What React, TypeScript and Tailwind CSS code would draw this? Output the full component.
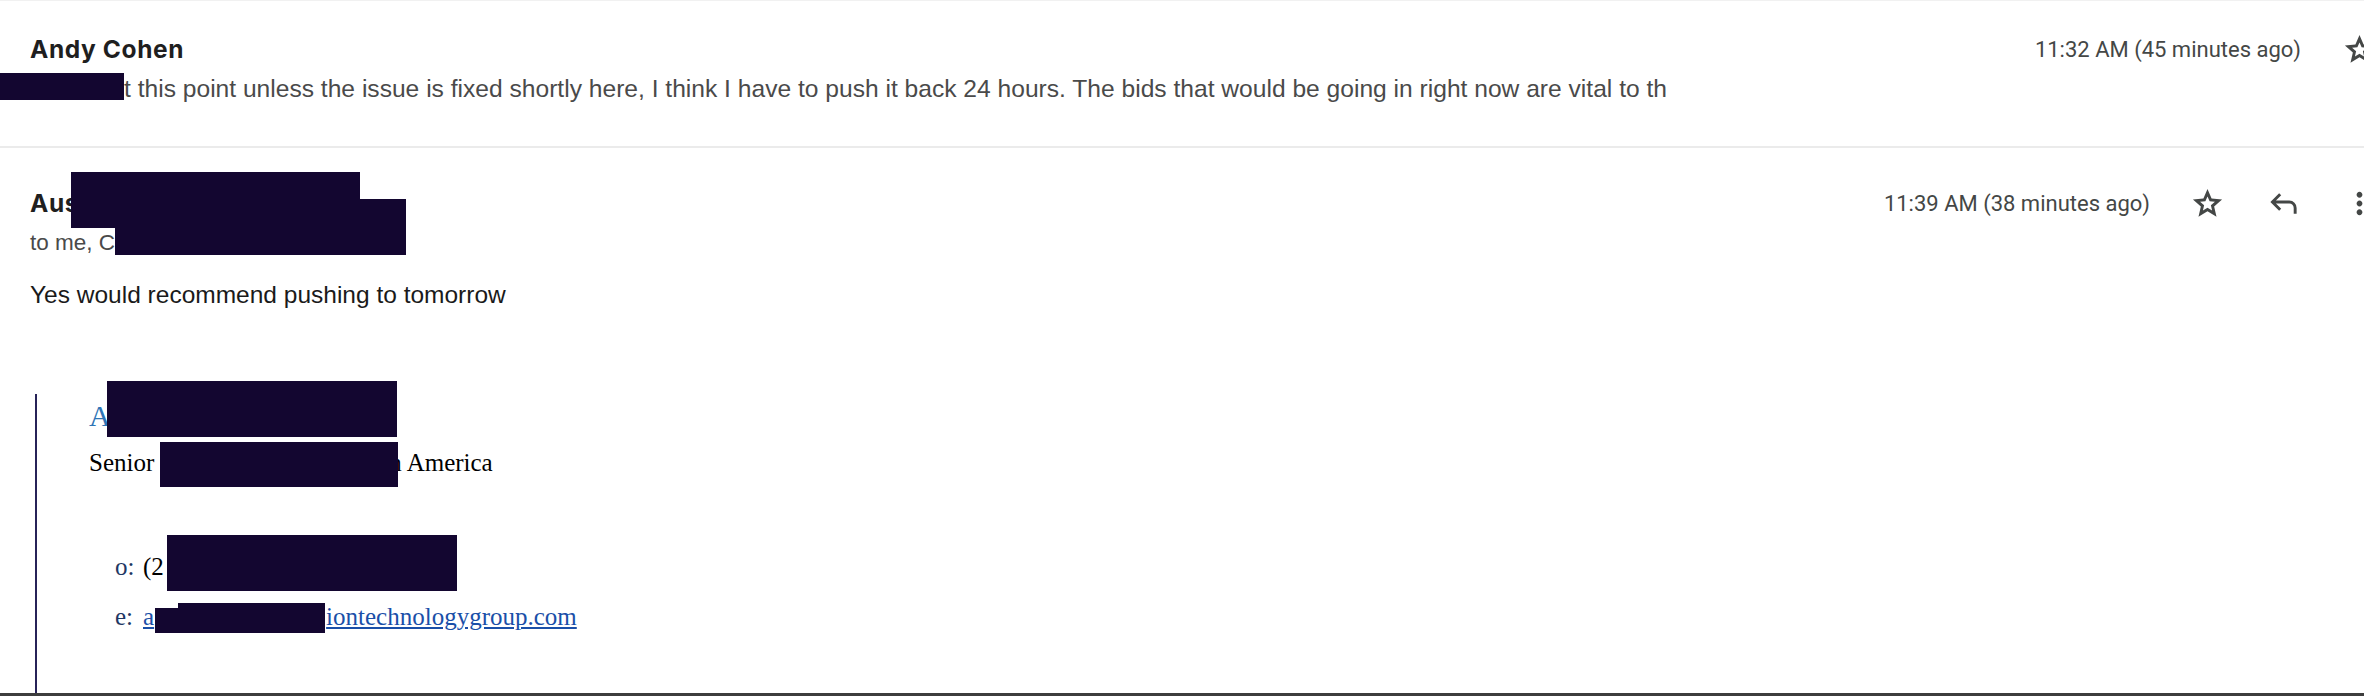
import React from 'react';

const ICON = '#444746';

const StarIcon = () => (
  <svg width="35" height="35" viewBox="0 -960 960 960" fill={ICON}>
    <path d="M354-287l126-76 126 77-33-144 111-96-146-13-58-136-58 135-146 13 111 97-33 143ZM233-120l65-281L80-590l288-25 112-265 112 265 288 25-218 189 65 281-247-149-247 149Z" />
  </svg>
);

const ReplyIcon = () => (
  <svg width="35" height="35" viewBox="0 -960 960 960" fill={ICON}>
    <path d="M760-200v-160q0-50-35-85t-85-35H273l144 144-57 56-240-240 240-240 57 56-144 144h367q83 0 141.5 58.5T840-360v160h-80Z" />
  </svg>
);

const MoreIcon = () => (
  <svg width="35" height="35" viewBox="0 -960 960 960" fill={ICON}>
    <path d="M480-160q-33 0-56.5-23.5T400-240q0-33 23.5-56.5T480-320q33 0 56.5 23.5T560-240q0 33-23.5 56.5T480-160Zm0-240q-33 0-56.5-23.5T400-480q0-33 23.5-56.5T480-560q33 0 56.5 23.5T560-480q0 33-23.5 56.5T480-400Zm0-240q-33 0-56.5-23.5T400-720q0-33 23.5-56.5T480-800q33 0 56.5 23.5T560-720q0 33-23.5 56.5T480-640Z" />
  </svg>
);

const IconButton = ({ children }: { children: React.ReactNode }) => (
  <button className="w-[76px] h-[35px] flex items-center justify-center">{children}</button>
);

const Stamp = ({ text }: { text: string }) => (
  <span className="font-['Roboto',sans-serif] text-[22px] text-[#444746] whitespace-nowrap">{text}</span>
);

const senderFont = "font-['Inter',sans-serif] font-bold text-[24.5px] tracking-[0.6px] leading-[35px] text-[#1f1f1f]";

export default function App() {
  return (
    <div className="relative w-screen h-[696px] overflow-hidden bg-white flex flex-col">
      <div className="flex-1 min-h-0 overflow-hidden">
        <div className="w-[2397px] font-['Liberation_Sans',Arial,sans-serif]">
          {/* Collapsed message */}
          <div className="h-[148px] border-t border-[#f1f1f1] border-b-2 border-b-[#ebebeb] pl-[30px] pt-[31px]">
            <div className="flex items-center h-[35px]">
              <div className={`flex-1 ${senderFont}`}>Andy Cohen</div>
              <Stamp text="11:32 AM (45 minutes ago)" />
              <div className="ml-[20px] flex">
                <IconButton>
                  <StarIcon />
                </IconButton>
              </div>
            </div>
            <div className="mt-[7px] leading-[30px] text-[24.6px] text-[#4a4a4a] whitespace-nowrap">
              <span className="inline-block w-[94px]" />t this point unless the issue is fixed shortly here, I think I have to push it back 24 hours. The bids that would be going in right now are vital to th
            </div>
          </div>

          {/* Expanded message */}
          <div className="pl-[30px] pt-[37.5px]">
            <div className="flex items-center h-[35px]">
              <div className={`flex-1 ${senderFont}`}>Aus</div>
              <Stamp text="11:39 AM (38 minutes ago)" />
              <div className="ml-[19px] flex">
                <IconButton>
                  <StarIcon />
                </IconButton>
                <IconButton>
                  <ReplyIcon />
                </IconButton>
                <IconButton>
                  <MoreIcon />
                </IconButton>
              </div>
            </div>
            <div className="mt-[9px] leading-[26px] text-[22.5px] text-[#4a4a4a]">to me, C</div>
            <div className="mt-[24px] leading-[30px] text-[24.5px] text-[#1a1a1a]">Yes would recommend pushing to tomorrow</div>

            {/* Signature */}
            <div className="mt-[84px] ml-[5px] h-[400px] border-l-2 border-[#272358] pl-[52px] pt-[2px] font-['Liberation_Serif','Times_New_Roman',serif]">
              <div className="leading-[40px] text-[30px] text-[#2e75b6]">A</div>
              <div className="mt-[12px] leading-[30px] text-[25px] text-black whitespace-nowrap">
                Senior<span className="inline-block w-[235px]" />n America
              </div>
              <div className="mt-[74px] pl-[26px] leading-[30px] text-[25px] text-black whitespace-nowrap">
                <span className="inline-block w-[28px] text-[#1f3864]">o:</span>(2
              </div>
              <div className="mt-[20px] pl-[26px] leading-[30px] text-[25px] whitespace-nowrap">
                <span className="inline-block w-[28px] text-[#1f3864]">e:</span>
                <a className="text-[#1a4fa8] underline">
                  a<span className="inline-block w-[172px]" />iontechnologygroup.com
                </a>
              </div>
            </div>
          </div>
        </div>
      </div>
      <div className="h-[3px] bg-[#3d3d3d]" />

      {/* Redactions */}
      <div className="absolute left-0 top-[73px] w-[124px] h-[27px] bg-[#130630]" />
      <div className="absolute left-[71px] top-[172px] w-[289px] h-[56px] bg-[#130630]" />
      <div className="absolute left-[115px] top-[199px] w-[291px] h-[56px] bg-[#130630]" />
      <div className="absolute left-[107px] top-[381px] w-[290px] h-[56px] bg-[#130630]" />
      <div className="absolute left-[160px] top-[442px] w-[238px] h-[45px] bg-[#130630]" />
      <div className="absolute left-[167px] top-[535px] w-[290px] h-[56px] bg-[#130630]" />
      <div className="absolute left-[155px] top-[608px] w-[24px] h-[25px] bg-[#130630]" />
      <div className="absolute left-[178px] top-[603px] w-[147px] h-[30px] bg-[#130630]" />
    </div>
  );
}
